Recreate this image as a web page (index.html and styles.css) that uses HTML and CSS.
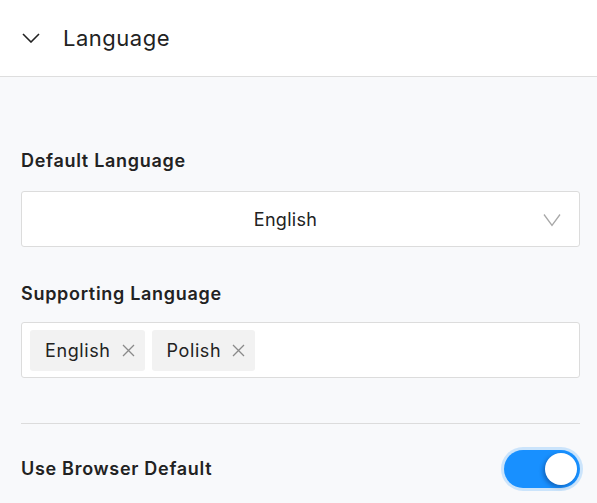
FILE: index.html
```html
<!DOCTYPE html>
<html>
<head>
<meta charset="utf-8">
<link rel="stylesheet" href="styles.css">
</head>
<body>
<div class="header">
  <svg class="hchev" width="18" height="10" viewBox="0 0 18 10"><path d="M1 1 L9 9 L17 1" fill="none" stroke="#222" stroke-width="1.6"/></svg>
  <span class="htitle">Language</span>
</div>
<div class="content">
  <div class="label first">Default Language</div>
  <div class="select">
    <span class="sval">English</span>
    <svg class="schev" width="18" height="14" viewBox="0 0 18 14"><path d="M1 1.5 L9 12.5 L17 1.5" fill="none" stroke="#a8a8a8" stroke-width="1.3"/></svg>
  </div>
  <div class="label">Supporting Language</div>
  <div class="tags">
    <span class="tag">English <svg class="x" width="13" height="13" viewBox="0 0 13 13"><path d="M1 1 L12 12 M12 1 L1 12" stroke="#8a8a8a" stroke-width="1.3"/></svg></span>
    <span class="tag">Polish <svg class="x" width="13" height="13" viewBox="0 0 13 13"><path d="M1 1 L12 12 M12 1 L1 12" stroke="#8a8a8a" stroke-width="1.3"/></svg></span>
  </div>
  <div class="divider"></div>
  <div class="row">
    <span class="label nomargin">Use Browser Default</span>
    <span class="toggle"><span class="knob"></span></span>
  </div>
</div>
</body>
</html>
```
FILE: styles.css
```css
html, body {
  margin: 0;
  padding: 0;
}
body {
  background: #f8f9fb;
  font-family: "Inter", "Liberation Sans", sans-serif;
  color: #222;
  width: 597px;
  height: 503px;
  overflow: hidden;
  letter-spacing: 0.3px;
}
.header {
  background: #fff;
  height: 76px;
  border-bottom: 1px solid #dedede;
  display: flex;
  align-items: center;
  padding-left: 22px;
}
.hchev {
  display: block;
  margin-top: -1px;
}
.htitle {
  font-size: 22px;
  margin-left: 23px;
  color: #222;
  letter-spacing: 0.5px;
}
.content {
  padding: 0 17px 0 21px;
}
.label {
  font-size: 18px;
  font-weight: 600;
  line-height: 24px;
  color: #222;
  letter-spacing: 0.7px;
  margin: 35px 0 16px;
}
.label.first {
  margin-top: 72px;
  margin-bottom: 18px;
}
.label.nomargin {
  margin: 0;
}
.select {
  height: 54px;
  background: #fff;
  border: 1px solid #dcdcdc;
  border-radius: 3px;
  display: flex;
  align-items: center;
  justify-content: center;
  padding-right: 30px;
  position: relative;
}
.sval {
  font-size: 18px;
}
.schev {
  position: absolute;
  right: 18px;
  top: 21px;
}
.tags {
  height: 54px;
  background: #fff;
  border: 1px solid #dcdcdc;
  border-radius: 3px;
  display: flex;
  align-items: center;
  gap: 7px;
  padding-left: 8px;
}
.tag {
  height: 41px;
  background: #f2f2f2;
  border-radius: 3px;
  display: flex;
  align-items: center;
  padding: 0 10px 0 15px;
  font-size: 18px;
  letter-spacing: 0.6px;
  gap: 11px;
}
.x {
  display: block;
}
.divider {
  height: 1px;
  background: #dcdcdc;
  margin-top: 45px;
}
.row {
  display: flex;
  align-items: center;
  justify-content: space-between;
  margin-top: 26px;
}
.toggle {
  width: 76px;
  height: 38px;
  border-radius: 19px;
  background: #1890ff;
  box-shadow: 0 0 0 3px rgba(24, 144, 255, 0.2);
  position: relative;
  display: block;
}
.knob {
  position: absolute;
  width: 32px;
  height: 32px;
  border-radius: 50%;
  background: #fff;
  right: 3px;
  top: 3px;
  box-shadow: -2px 2px 4px rgba(0, 0, 40, 0.3);
}
```
